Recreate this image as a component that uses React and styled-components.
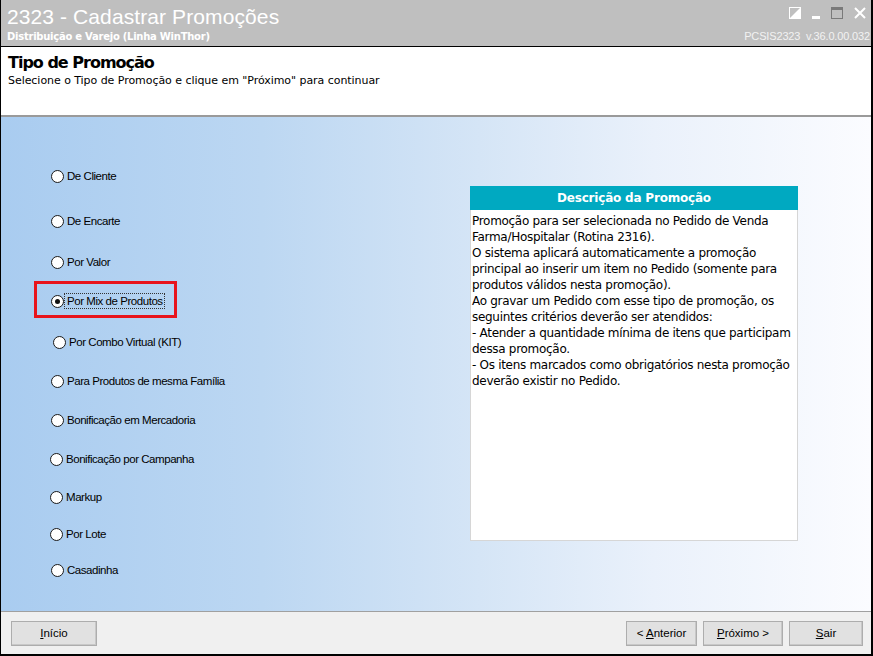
import React from "react";
import styled, { createGlobalStyle } from "styled-components";

const Global = createGlobalStyle`
  html, body { margin: 0; padding: 0; background: #fff; }
  #root { width: 873px; height: 656px; }
`;

const Window = styled.div`
  width: 873px;
  height: 656px;
  box-sizing: border-box;
  display: flex;
  flex-direction: column;
  border-left: 1px solid #000;
  border-right: 2px solid #000;
  border-bottom: 2px solid #000;
  font-family: "Liberation Sans", Arial, sans-serif;
  overflow: hidden;
`;

const TitleBar = styled.div`
  height: 46px;
  background: #bfbfbf;
  margin-left: -1px;
  margin-right: -2px;
  position: relative;
  display: flex;
  flex-direction: column;
  padding: 4px 0 0 7px;
  box-sizing: border-box;
  color: #fff;
`;

const Title = styled.div`
  font-size: 21px;
  line-height: 26px;
  letter-spacing: 0.1px;
`;

const Subtitle = styled.div`
  font-family: "DejaVu Sans", Tahoma, sans-serif;
  font-weight: bold;
  font-size: 10px;
  line-height: 14px;
  letter-spacing: -0.25px;
`;

const Controls = styled.div`
  position: absolute;
  right: 7px;
  top: 7px;
  display: flex;
  gap: 11px;
  align-items: center;
`;

const Version = styled.div`
  position: absolute;
  right: 3px;
  top: 29px;
  font-size: 11px;
  line-height: 14px;
  color: #f2f2f2;
  white-space: pre;
  letter-spacing: -0.15px;
`;

const Header = styled.div`
  height: 71px;
  background: #fff;
  border-top: 1px solid #000;
  border-bottom: 2px solid #9a9a9a;
  padding: 6px 0 0 7px;
  box-sizing: border-box;
`;

const HeaderTitle = styled.div`
  font-family: "DejaVu Sans", Tahoma, sans-serif;
  font-weight: bold;
  font-size: 16px;
  line-height: 20px;
  color: #000;
  letter-spacing: -1px;
`;

const HeaderText = styled.div`
  font-family: "DejaVu Sans", Tahoma, sans-serif;
  font-size: 11px;
  line-height: 14px;
  color: #000;
  margin-top: 1px;
  letter-spacing: -0.05px;
`;

const Body = styled.div`
  flex: 1;
  display: flex;
  background: linear-gradient(to right, #a9ccf0 0%, #bcd7f2 30%, #d5e5f6 55%, #eaf1fb 75%, #fbfcff 100%);
`;

const OptionList = styled.div`
  width: 420px;
  display: flex;
  flex-direction: column;
  padding-top: 51px;
  padding-left: 50px;
  box-sizing: border-box;
`;

const OptionRow = styled.div`
  display: flex;
  align-items: center;
  height: 16px;
  margin-top: ${(p) => p.$mt}px;
  margin-left: ${(p) => p.$ml}px;
  position: relative;
  font-family: "Liberation Sans", Arial, sans-serif;
  font-size: 11.5px;
  letter-spacing: -0.45px;
  color: #000;
  ${(p) =>
    p.$highlight &&
    `
    &::after {
      content: "";
      position: absolute;
      left: -17px;
      top: -12px;
      width: 137px;
      height: 31px;
      border: 3px solid #e8141c;
    }
  `}
`;

const Radio = styled.span`
  width: 11px;
  height: 11px;
  border-radius: 50%;
  border: 1px solid #1a1a1a;
  background: #fff;
  display: flex;
  align-items: center;
  justify-content: center;
  flex-shrink: 0;
  &::before {
    content: "";
    width: 5px;
    height: 5px;
    border-radius: 50%;
    background: ${(p) => (p.$checked ? "#111" : "transparent")};
  }
`;

const Label = styled.span`
  padding: 1px 1px 1px 2px;
  border: 1px dotted ${(p) => (p.$focus ? "#333" : "transparent")};
  white-space: nowrap;
`;

const PanelArea = styled.div`
  padding-top: 69px;
  padding-left: 49px;
`;

const Panel = styled.div`
  width: 328px;
  height: 355px;
  background: #fff;
  border: 1px solid #d6d6d6;
  border-top: none;
  box-sizing: border-box;
  display: flex;
  flex-direction: column;
`;

const PanelHeader = styled.div`
  height: 24px;
  background: #00a9c1;
  color: #fff;
  font-family: "DejaVu Sans", Tahoma, sans-serif;
  font-weight: bold;
  font-size: 12px;
  letter-spacing: -0.2px;
  display: flex;
  align-items: center;
  justify-content: center;
  margin: 0 -1px;
`;

const PanelText = styled.div`
  padding: 3px 0 0 1px;
  font-family: "DejaVu Sans", Tahoma, sans-serif;
  font-size: 12px;
  line-height: 16px;
  color: #000;
  letter-spacing: -0.3px;
`;

const Footer = styled.div`
  height: 43px;
  background: #f0f0f0;
  border-top: 1px solid #a0a0a0;
  display: flex;
  align-items: center;
  padding: 0 8px 0 10px;
  box-sizing: border-box;
`;

const Spacer = styled.div`
  flex: 1;
`;

const Button = styled.button`
  width: ${(p) => p.$w}px;
  height: 25px;
  margin-left: ${(p) => p.$ml || 0}px;
  background: #e1e1e1;
  border: 1px solid;
  border-color: #fff #8c8c8c #8c8c8c #fff;
  box-shadow: inset -1px -1px 0 #c8c8c8;
  outline: 1px solid #adadad;
  outline-offset: -1px;
  font-family: "Liberation Sans", Arial, sans-serif;
  font-size: 11.5px;
  color: #000;
  padding: 0;
  u { text-decoration: underline; }
`;

const options = [
  { label: "De Cliente", mt: 0, ml: 0 },
  { label: "De Encarte", mt: 29, ml: 0 },
  { label: "Por Valor", mt: 25, ml: 0 },
  { label: "Por Mix de Produtos", mt: 23, ml: 0, checked: true },
  { label: "Por Combo Virtual (KIT)", mt: 25, ml: 2 },
  { label: "Para Produtos de mesma Família", mt: 23, ml: 0 },
  { label: "Bonificação em Mercadoria", mt: 23, ml: 0 },
  { label: "Bonificação por Campanha", mt: 23, ml: -1 },
  { label: "Markup", mt: 22, ml: -1 },
  { label: "Por Lote", mt: 21, ml: -1 },
  { label: "Casadinha", mt: 20, ml: 0 },
];

const desc = [
  "Promoção para ser selecionada no Pedido de Venda",
  "Farma/Hospitalar (Rotina 2316).",
  "O sistema aplicará automaticamente a promoção",
  "principal ao inserir um item no Pedido (somente para",
  "produtos válidos nesta promoção).",
  "Ao gravar um Pedido com esse tipo de promoção, os",
  "seguintes critérios deverão ser atendidos:",
  "- Atender a quantidade mínima de itens que participam",
  "dessa promoção.",
  "- Os itens marcados como obrigatórios nesta promoção",
  "deverão existir no Pedido.",
];

function WinControls() {
  return (
    <Controls>
      <svg width="12" height="12" viewBox="0 0 12 12">
        <rect x="0.5" y="0.5" width="11" height="11" fill="none" stroke="#fff" />
        <polygon points="1,11 11,1 11,11" fill="#fff" />
      </svg>
      <svg width="8" height="12" viewBox="0 0 8 12">
        <rect x="0" y="9" width="8" height="3" fill="#fff" />
      </svg>
      <svg width="12" height="12" viewBox="0 0 12 12">
        <rect x="0.5" y="0.5" width="11" height="11" fill="none" stroke="#7a7a7a" />
        <rect x="0" y="0" width="12" height="3" fill="#7a7a7a" />
      </svg>
      <svg width="12" height="12" viewBox="0 0 12 12">
        <path d="M1 1 L11 11 M11 1 L1 11" stroke="#fff" strokeWidth="2" />
      </svg>
    </Controls>
  );
}

export default function App() {
  return (
    <>
      <Global />
      <Window>
        <TitleBar>
          <Title>2323 - Cadastrar Promoções</Title>
          <Subtitle>Distribuição e Varejo (Linha WinThor)</Subtitle>
          <WinControls />
          <Version>PCSIS2323  v.36.0.00.032</Version>
        </TitleBar>
        <Header>
          <HeaderTitle>Tipo de Promoção</HeaderTitle>
          <HeaderText>Selecione o Tipo de Promoção e clique em "Próximo" para continuar</HeaderText>
        </Header>
        <Body>
          <OptionList>
            {options.map((o) => (
              <OptionRow key={o.label} $mt={o.mt} $ml={o.ml} $highlight={o.checked}>
                <Radio $checked={o.checked} />
                <Label $focus={o.checked}>{o.label}</Label>
              </OptionRow>
            ))}
          </OptionList>
          <PanelArea>
            <Panel>
              <PanelHeader>Descrição da Promoção</PanelHeader>
              <PanelText>
                {desc.map((l) => (
                  <div key={l}>{l}</div>
                ))}
              </PanelText>
            </Panel>
          </PanelArea>
        </Body>
        <Footer>
          <Button $w={86}>
            <u>I</u>nício
          </Button>
          <Spacer />
          <Button $w={71}>
            &lt; <u>A</u>nterior
          </Button>
          <Button $w={80} $ml={6}>
            <u>P</u>róximo &gt;
          </Button>
          <Button $w={74} $ml={6}>
            <u>S</u>air
          </Button>
        </Footer>
      </Window>
    </>
  );
}
